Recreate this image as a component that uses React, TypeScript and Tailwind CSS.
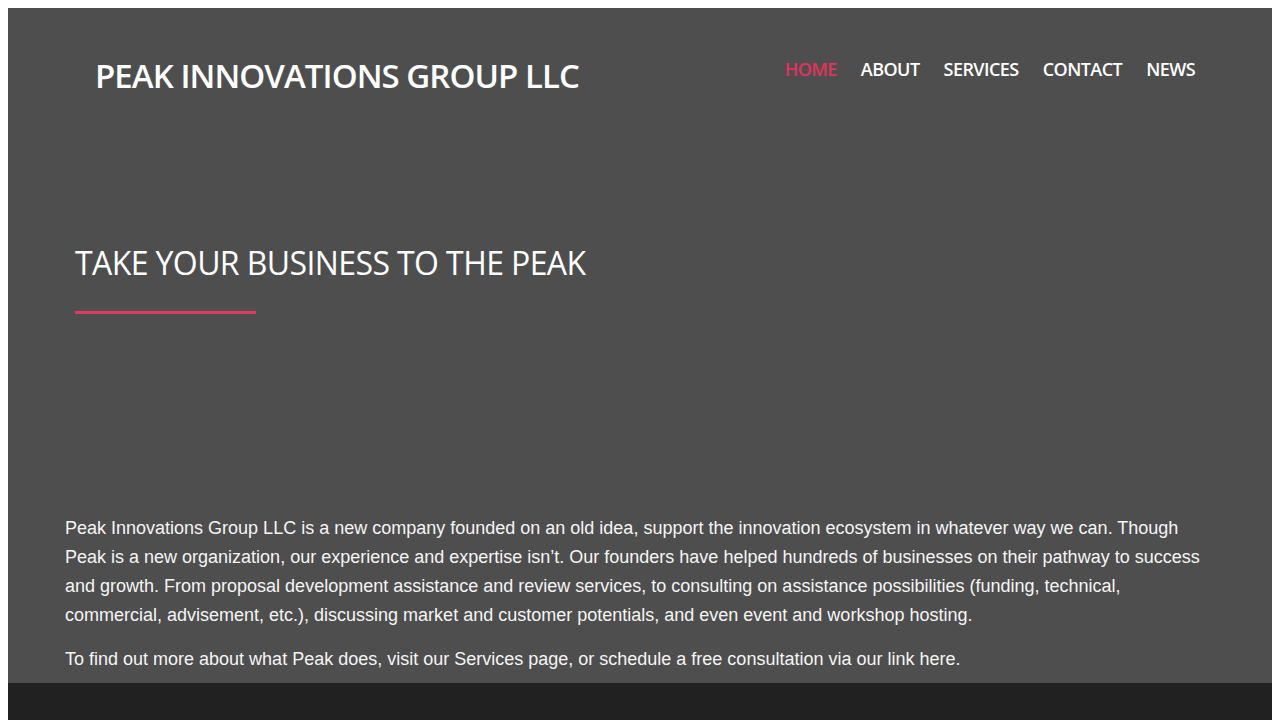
const navItems = ['HOME', 'ABOUT', 'SERVICES', 'CONTACT', 'NEWS'];

export default function App() {
  return (
    <div className="bg-white px-2 pt-2" style={{ minHeight: 720 }}>
      <div className="flex h-[675px] flex-col bg-[#4e4e4e] text-white">
        <header className="flex items-start justify-between pl-[87px] pr-[77px] pt-[48px]">
          <div className="font-['Open_Sans',sans-serif] text-[33px] font-semibold leading-[40px] tracking-[-0.95px]">
            PEAK INNOVATIONS GROUP LLC
          </div>
          <nav className="flex gap-[24px] pt-[3px] font-['Open_Sans',sans-serif] text-[18px] font-semibold leading-[20px] tracking-[-0.55px]">
            {navItems.map((item, i) => (
              <a key={item} href="#" className={i === 0 ? 'text-[#e0335d]' : 'text-white'}>
                {item}
              </a>
            ))}
          </nav>
        </header>

        <section className="pl-[67px] pt-[147px]">
          <h1 className="font-['Open_Sans',sans-serif] text-[32px] font-normal leading-[40px] tracking-[-0.6px]">
            TAKE YOUR BUSINESS TO THE PEAK
          </h1>
          <div className="mt-[28px] h-[3px] w-[181px] bg-[#dc3a5e]" />
        </section>

        <section className="mt-auto pb-[9px] pl-[57px] pr-[60px] font-['Liberation_Sans',Arial,sans-serif] text-[18px] leading-[29px] text-[#f5f5f5]">
          <p>
            Peak Innovations Group LLC is a new company founded on an old idea, support the innovation ecosystem in
            whatever way we can. Though Peak is a new organization, our experience and expertise isn’t. Our founders
            have helped hundreds of businesses on their pathway to success and growth. From proposal development
            assistance and review services, to consulting on assistance possibilities (funding, technical, commercial,
            advisement, etc.), discussing market and customer potentials, and even event and workshop hosting.
          </p>
          <p className="mt-[15px]">
            To find out more about what Peak does, visit our Services page, or schedule a free consultation via our link
            here.
          </p>
        </section>
      </div>
      <div className="h-[60px] bg-[#212121]" />
    </div>
  );
}
